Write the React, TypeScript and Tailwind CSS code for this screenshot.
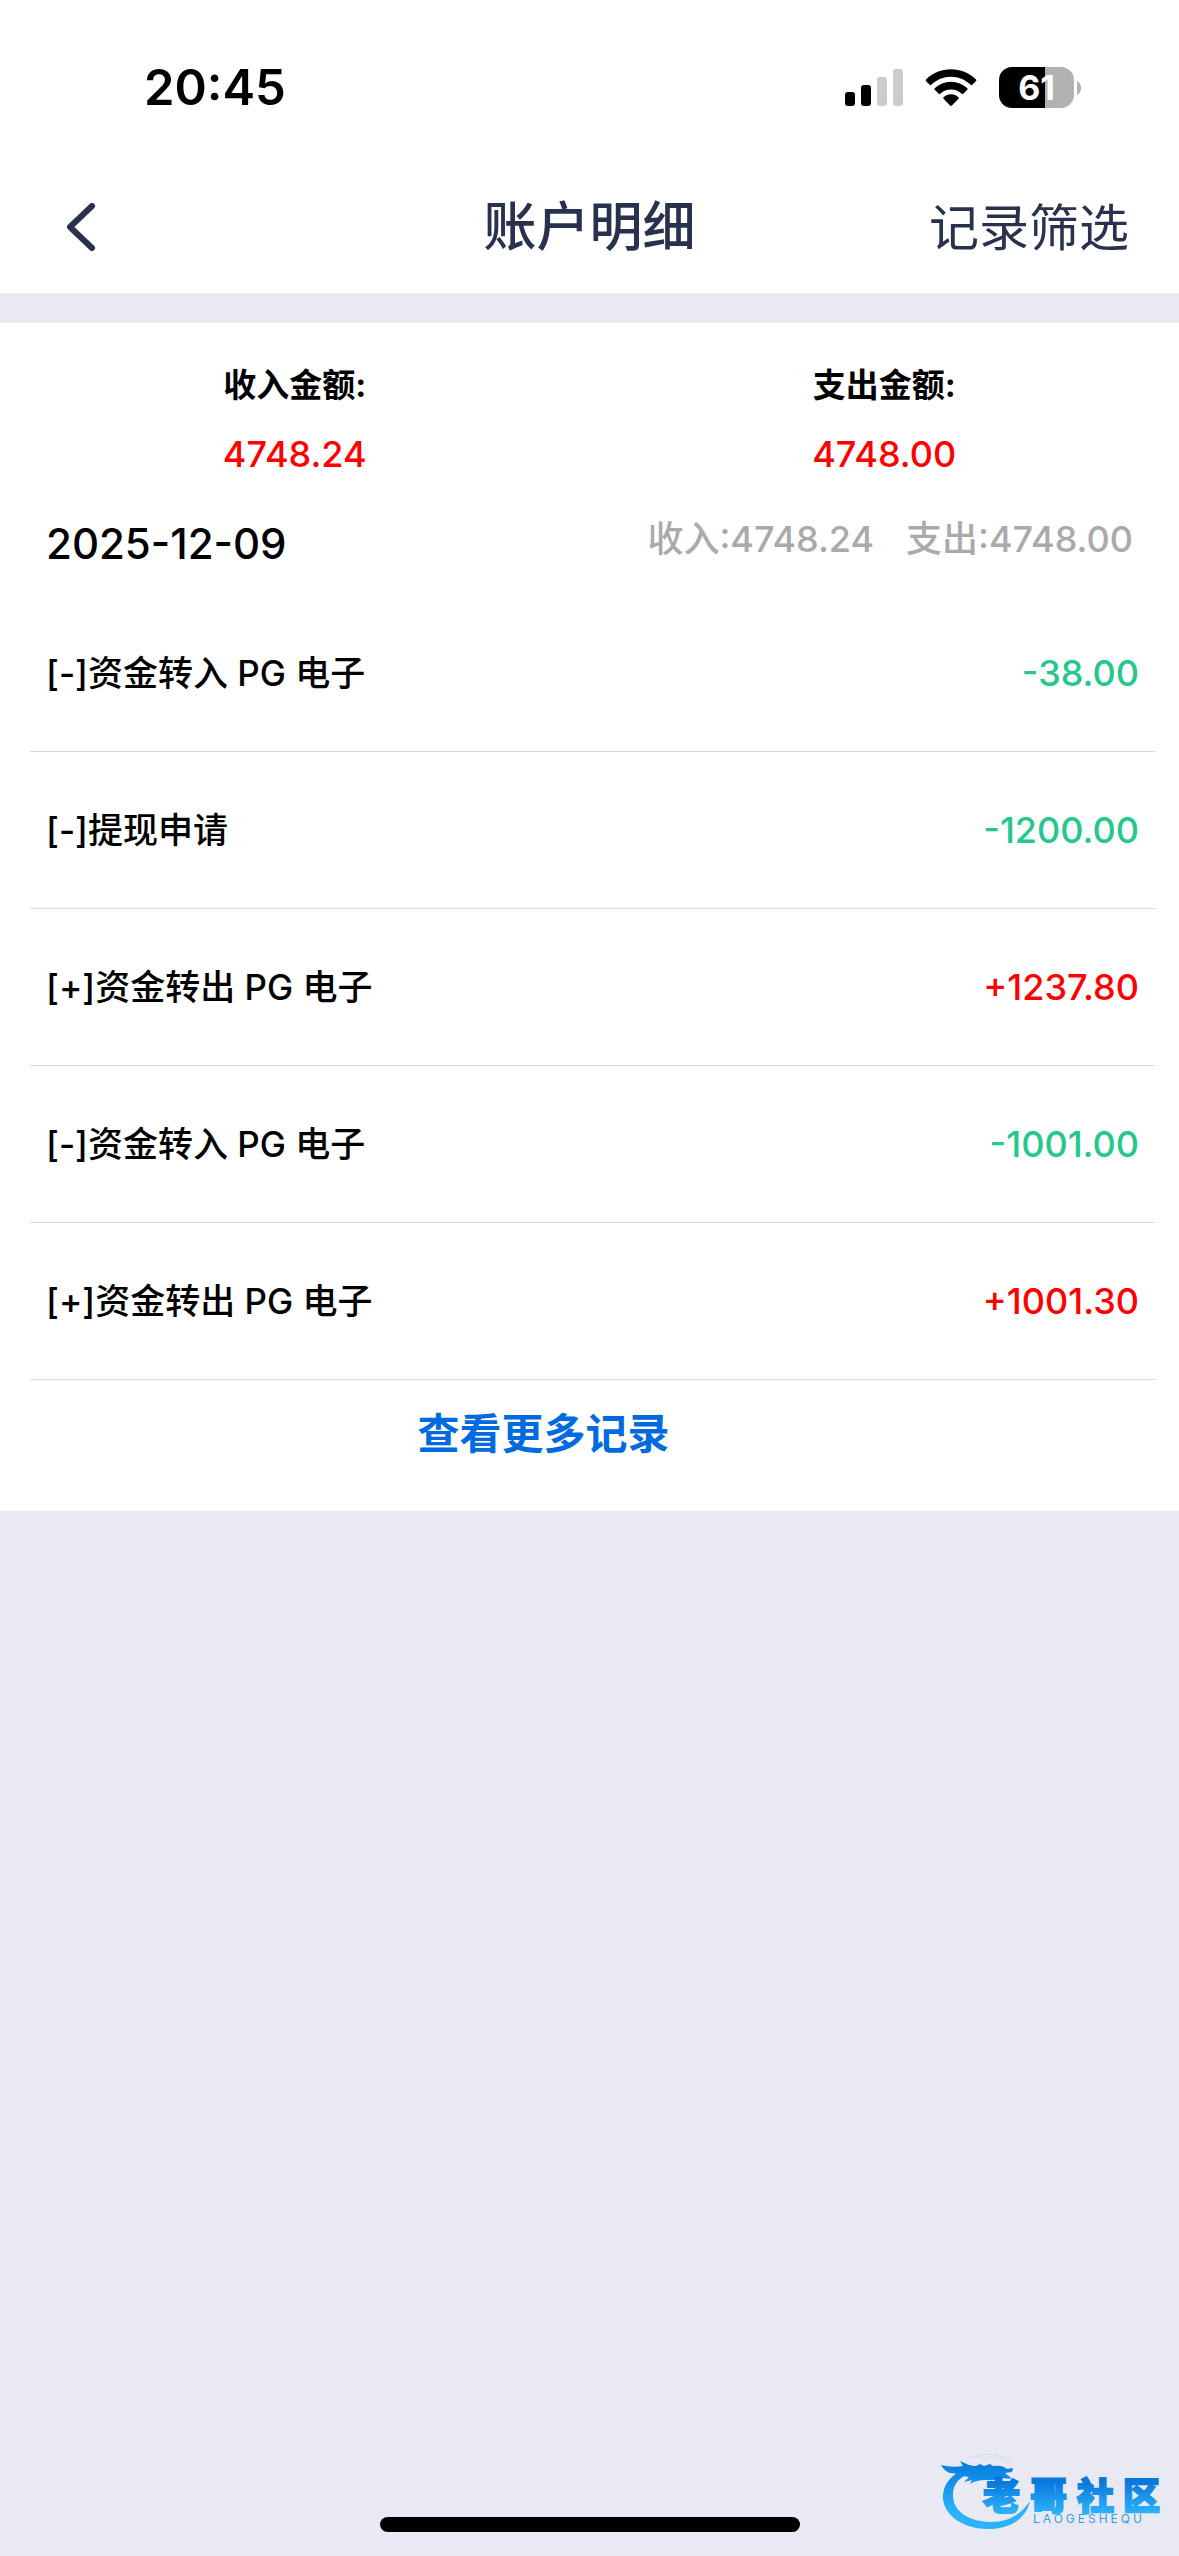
import React from 'react'

type TRecord = {
  id: number
  title: string
  amount: string
}

const records: TRecord[] = [
  { id: 1, title: '[-]资金转入 PG 电子', amount: '-38.00' },
  { id: 2, title: '[-]提现申请', amount: '-1200.00' },
  { id: 3, title: '[+]资金转出 PG 电子', amount: '+1237.80' },
  { id: 4, title: '[-]资金转入 PG 电子', amount: '-1001.00' },
  { id: 5, title: '[+]资金转出 PG 电子', amount: '+1001.30' },
]

const SignalIcon = () => (
  <svg width="58" height="38" viewBox="0 0 58 38" aria-hidden="true">
    <rect x="0" y="23" width="10" height="14" rx="3" />
    <rect x="16" y="16" width="10" height="21" rx="3" />
    <rect x="32" y="8" width="10" height="29" rx="3" fill="#cccccc" />
    <rect x="48" y="0" width="10" height="37" rx="3" fill="#cccccc" />
  </svg>
)

const WifiIcon = () => (
  <svg width="52" height="38" viewBox="0 0 52 38" aria-hidden="true">
    <path d="M1 10.5C8 3.8 16.6.3 26 .3S44 3.800 51 10.500c.5.500.5 1 .1 1.500l-3.800 3.800c-.5.500-1 .5-1.500 0C40.300 10.600 33.500 7.700 26 7.700S11.700 10.600 6.200 15.800c-.5.500-1 .5-1.500 0L.9 12c-.4-.5-.4-1 .1-1.500z" />
    <path d="M9.700 19.300c4.500-4.200 10-6.500 16.300-6.500s11.800 2.300 16.300 6.500c.5.500.5 1 0 1.500l-4 4c-.5.500-1 .5-1.500 0-3-2.800-6.600-4.300-10.800-4.300s-7.800 1.500-10.800 4.300c-.5.500-1 .5-1.500 0l-4-4c-.5-.5-.5-1 0-1.500z" />
    <path d="M18.600 28.200c2-1.900 4.500-2.900 7.400-2.900s5.400 1 7.400 2.900c.5.500.5 1 .1 1.500l-6.600 6.900c-.6.600-1.200.6-1.800 0l-6.600-6.900c-.4-.5-.4-1 .1-1.500z" />
  </svg>
)

const Battery = () => (
  <div className="flex items-center gap-[3px]">
    <div className="flex h-[41px] w-[75px] items-center justify-center rounded-[13px] bg-linear-to-r from-black from-61% to-[#b2b2b2] to-61% text-[34px] font-bold text-white">
      61
    </div>
    <svg width="4" height="14" viewBox="0 0 4 14" aria-hidden="true">
      <path d="M0 0C2.500 1 4 3.700 4 7S2.500 13 0 14z" fill="#b2b2b2" />
    </svg>
  </div>
)

const StatusBar = () => (
  <div className="flex h-[159px] items-center justify-between pt-4 pr-[98px] pl-36">
    <span className="text-[49px] font-semibold">20:45</span>
    <div className="flex items-center gap-[22px]">
      <SignalIcon />
      <WifiIcon />
      <Battery />
    </div>
  </div>
)

const Header = () => (
  <header className="grid h-[134px] grid-cols-3 items-center pt-1 text-[#28324f]">
    <button type="button" aria-label="返回" className="w-fit pl-[62px]">
      <svg width="34" height="50" viewBox="0 0 34 50" fill="none" aria-hidden="true">
        <path
          d="M30 3L8 24l22 21"
          stroke="currentColor"
          strokeWidth="6"
          strokeLinecap="round"
          strokeLinejoin="round"
        />
      </svg>
    </button>
    <h1 className="text-center text-[53px] font-medium">账户明细</h1>
    <button type="button" className="justify-self-end pr-[50px] text-[50px]">
      记录筛选
    </button>
  </header>
)

const Total = ({ label, value }: { label: string; value: string }) => (
  <div className="flex flex-1 flex-col items-center gap-5">
    <dt className="text-[33px] leading-[52px] font-bold">{label}</dt>
    <dd className="text-[36px] leading-[46px] font-medium text-[#ff0000]">{value}</dd>
  </div>
)

const RecordItem = ({ title, amount }: TRecord) => (
  <li className="flex h-[157px] items-center justify-between border-b border-[#d9d9e5] px-4 font-medium">
    <span className="text-[35px]">{title}</span>
    <span
      className={
        amount.startsWith('-') ? 'text-[36px] text-[#24c78c]' : 'text-[36px] text-[#ff0000]'
      }
    >
      {amount}
    </span>
  </li>
)

const Watermark = () => (
  <svg
    className="absolute right-4 bottom-6"
    width="222"
    height="78"
    viewBox="0 0 222 78"
    role="img"
    aria-label="老哥社区"
  >
    <defs>
      <linearGradient id="wave" x1="0" y1="0" x2="0" y2="78" gradientUnits="userSpaceOnUse">
        <stop offset="0.15" stopColor="#087fe0" />
        <stop offset="0.75" stopColor="#2bb3fb" />
      </linearGradient>
      <linearGradient id="word" x1="0" y1="28" x2="0" y2="58" gradientUnits="userSpaceOnUse">
        <stop offset="0" stopColor="#0878dc" />
        <stop offset="1" stopColor="#2bb1fb" />
      </linearGradient>
    </defs>
    {/* dragon body */}
    <path
      d="M26 14C10 20 1 31 2 45c2 18 22 30 45 30 22 0 38-10 42-28-9 14-23 21-38 21-22 0-38-10-39-25C11 31 18 23 31 18z"
      fill="url(#wave)"
    />
    {/* dragon head and mane */}
    <path
      d="M0 11c8 2 15 2 22 1l-3-5c6 3 11 5 16 5l4-2 4 2 6-2 3 2c6-1 11 0 14 3l6-1-1 4-7 1 5 4 1 2-9-1c-6 3-11 2-16 2-7 0-11 1-16 4l2-4-8 2 5-5-7-1c-4-2-8-3-12-3-3-1-7-4-9-8z"
      fill="url(#wave)"
    />
    <path
      d="M28 4c8-4 12 2 20 1M36 2c14-4 28 0 35 8M48 3c8 0 14 2 17 6"
      stroke="#d3daee"
      fill="none"
    />
    <text
      x="42 89 136 182"
      y="56"
      fontSize="37"
      fontWeight="900"
      fill="url(#word)"
      stroke="url(#word)"
      strokeWidth="2"
    >
      老哥社区
    </text>
    <text x="92" y="69" fontSize="12" letterSpacing="3" fill="#3a9de8">
      LAOGESHEQU
    </text>
  </svg>
)

const App = () => {
  return (
    <div className="relative min-h-screen bg-[#e9e9f3] font-['Inter','Noto_Sans_CJK_SC',sans-serif] text-black">
      <div className="bg-white">
        <StatusBar />
        <Header />
      </div>

      <main className="mt-[30px] bg-white pt-9">
        <dl className="flex">
          <Total label="收入金额:" value="4748.24" />
          <Total label="支出金额:" value="4748.00" />
        </dl>

        <section className="pr-6 pl-[30px]">
          <div className="flex h-[118px] items-center justify-between pt-[14px] pr-[22px] pl-4">
            <h2 className="text-[42px] font-medium">2025-12-09</h2>
            <p className="flex gap-8 pb-2 text-[36px] font-medium text-[#aaaaaa]">
              <span>收入:4748.24</span>
              <span>支出:4748.00</span>
            </p>
          </div>
          <ul>
            {records.map(record => (
              <RecordItem {...record} key={record.id} />
            ))}
          </ul>
        </section>

        <div className="flex justify-center pt-[30px] pr-[92px] pb-[53px]">
          <button type="button" className="text-[42px] leading-[48px] font-bold text-[#006be0]">
            查看更多记录
          </button>
        </div>
      </main>

      <Watermark />
      <div className="absolute bottom-6 left-1/2 h-[15px] w-[420px] -translate-x-1/2 rounded-full bg-black" />
    </div>
  )
}

export default App
